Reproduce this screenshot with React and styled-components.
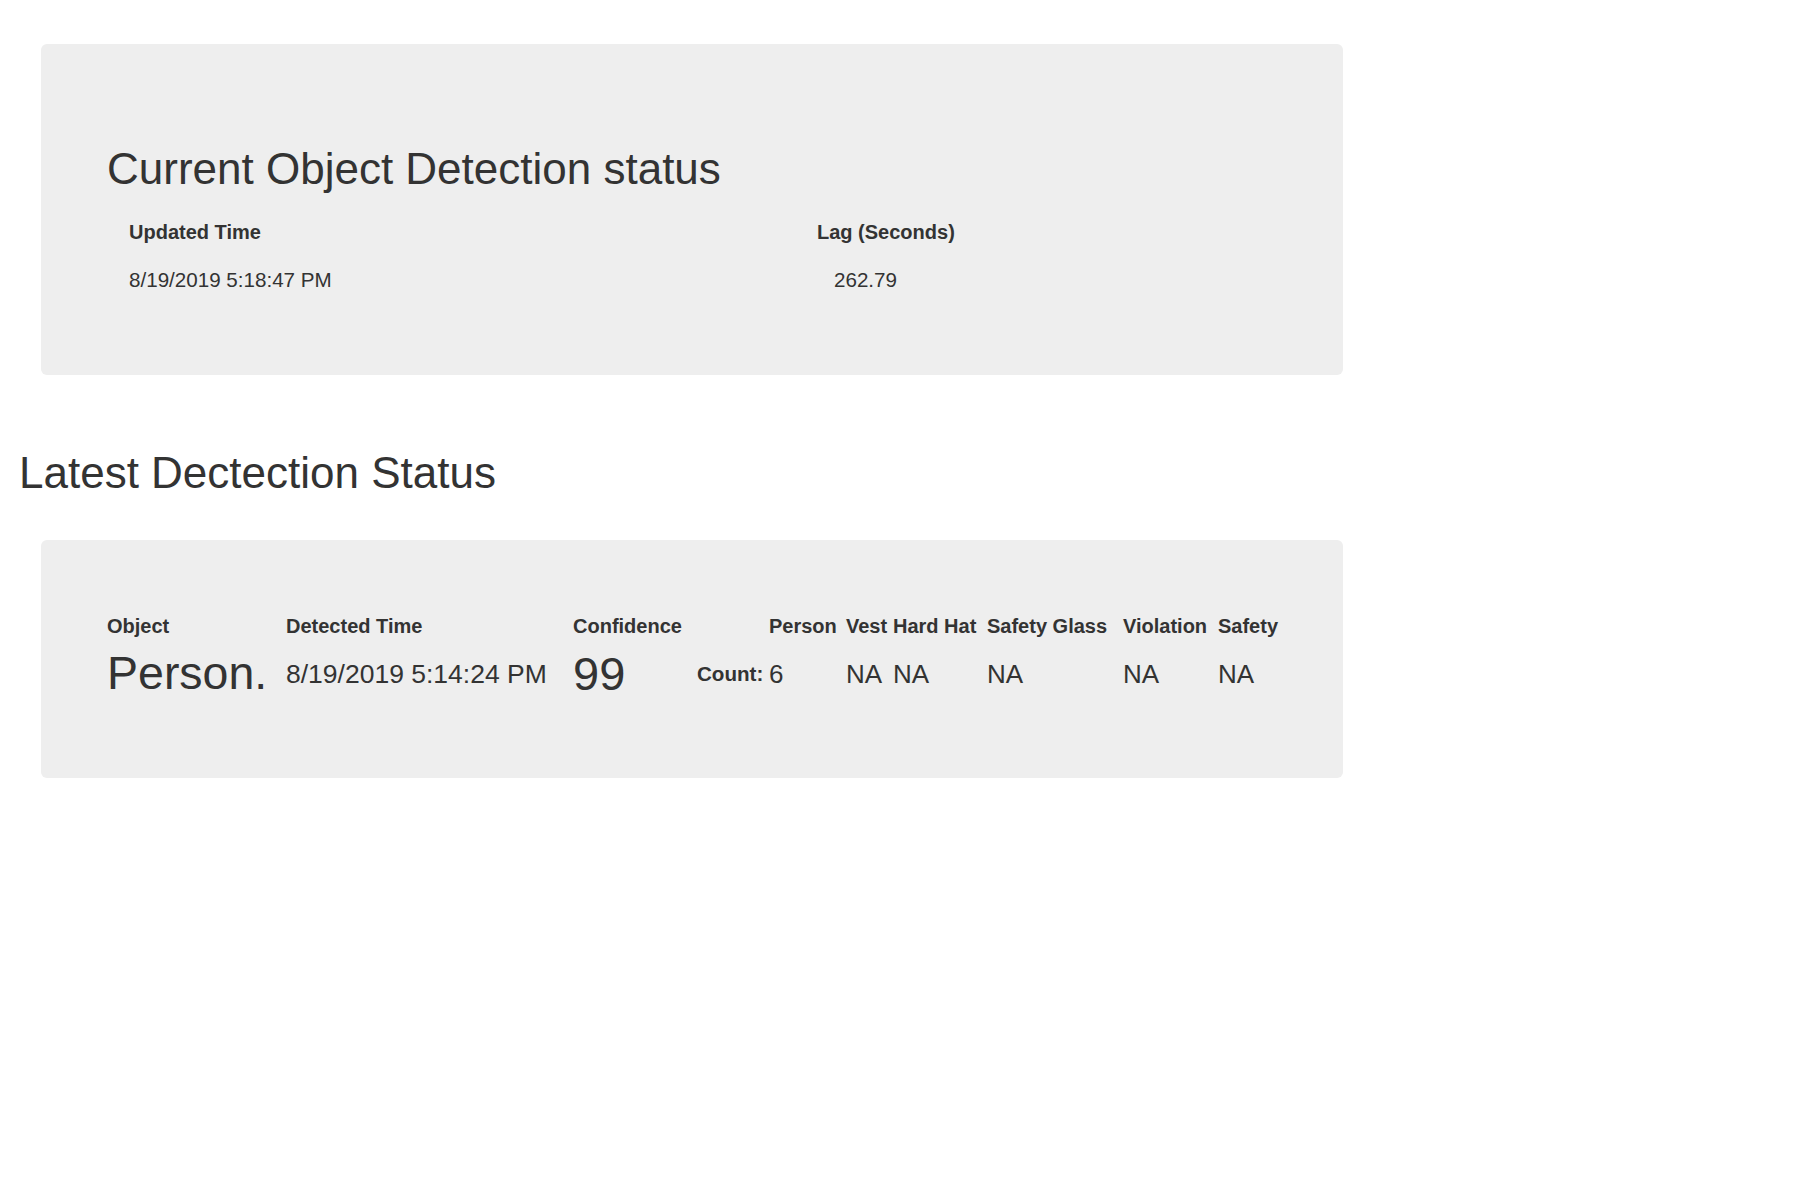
import React from 'react'
import styled, { createGlobalStyle } from 'styled-components'

const GlobalStyle = createGlobalStyle`
  body {
    margin: 0;
    background: #fff;
    color: #333;
    font-family: "Liberation Sans", Arial, Helvetica, sans-serif;
  }
`

const Page = styled.div`
  padding: 44px 0 0 19px;
`

const Jumbotron = styled.section`
  width: 1302px;
  margin-left: 22px;
  box-sizing: border-box;
  background: #eee;
  border-radius: 6px;
  padding: ${(p) => p.$pad};
`

const PanelTitle = styled.h1`
  margin: 0;
  font-size: 44px;
  font-weight: 400;
  line-height: 1.1;
`

const SectionTitle = styled.h2`
  margin: 74px 0 42px;
  font-size: 44px;
  font-weight: 400;
  line-height: 1.1;
`

const StatusTable = styled.div`
  display: grid;
  grid-template-columns: 688px auto;
  margin: 24px 0 0 22px;
  row-gap: 18px;
`

const DetectionTable = styled.div`
  display: grid;
  grid-template-columns: 179px 287px 124px 72px 77px 47px 94px 136px 95px auto;
  grid-template-rows: 30px auto;
  row-gap: 7px;
  align-items: center;
`

const HeadCell = styled.div`
  font-size: 20px;
  font-weight: 700;
  line-height: 30px;
  white-space: nowrap;
`

const ValueCell = styled.div`
  font-size: ${(p) => p.$size || 20.6}px;
  font-weight: ${(p) => (p.$bold ? 700 : 400)};
  line-height: ${(p) => (p.$size > 30 ? 1.1 : '30px')};
  padding-left: ${(p) => p.$indent || 0}px;
  white-space: nowrap;
`

const detectionHeads = [
  'Object',
  'Detected Time',
  'Confidence',
  '',
  'Person',
  'Vest',
  'Hard Hat',
  'Safety Glass',
  'Violation',
  'Safety',
]

const latest = {
  object: 'Person.',
  time: '8/19/2019 5:14:24 PM',
  confidence: 99,
  count: 6,
  vest: 'NA',
  hardHat: 'NA',
  glass: 'NA',
  violation: 'NA',
  safety: 'NA',
}

const App = () => {
  return (
    <Page>
      <GlobalStyle />
      <Jumbotron $pad="101px 66px 80px">
        <PanelTitle>Current Object Detection status</PanelTitle>
        <StatusTable>
          <HeadCell>Updated Time</HeadCell>
          <HeadCell>Lag (Seconds)</HeadCell>
          <ValueCell>8/19/2019 5:18:47 PM</ValueCell>
          <ValueCell $indent={17}>262.79</ValueCell>
        </StatusTable>
      </Jumbotron>

      <SectionTitle>Latest Dectection Status</SectionTitle>

      <Jumbotron $pad="71px 66px 79px">
        <DetectionTable>
          {detectionHeads.map((h, i) => (
            <HeadCell key={i}>{h}</HeadCell>
          ))}
          <ValueCell $size={46.5}>{latest.object}</ValueCell>
          <ValueCell $size={26.5}>{latest.time}</ValueCell>
          <ValueCell $size={47}>{latest.confidence}</ValueCell>
          <ValueCell $bold>Count:</ValueCell>
          <ValueCell $size={26}>{latest.count}</ValueCell>
          <ValueCell $size={26}>{latest.vest}</ValueCell>
          <ValueCell $size={26}>{latest.hardHat}</ValueCell>
          <ValueCell $size={26}>{latest.glass}</ValueCell>
          <ValueCell $size={26}>{latest.violation}</ValueCell>
          <ValueCell $size={26}>{latest.safety}</ValueCell>
        </DetectionTable>
      </Jumbotron>
    </Page>
  )
}

export default App
